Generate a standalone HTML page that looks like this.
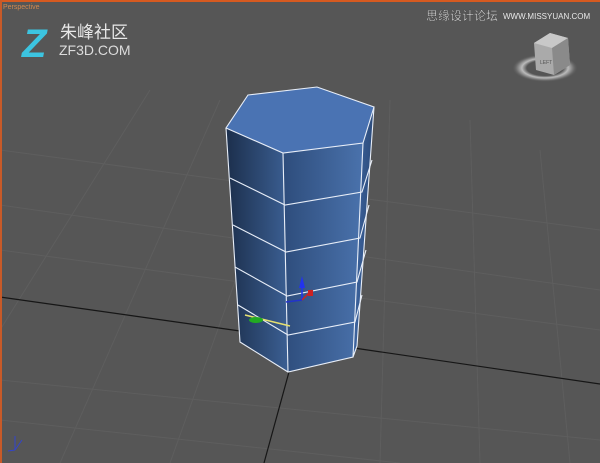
<!DOCTYPE html>
<html><head><meta charset="utf-8"><style>
html,body{margin:0;padding:0;width:600px;height:463px;overflow:hidden;background:#555}
</style></head><body>
<svg width="600" height="463" viewBox="0 0 600 463" xmlns="http://www.w3.org/2000/svg">
<defs>
<linearGradient id="lf" x1="0" x2="1" y1="0" y2="0"><stop offset="0" stop-color="#1c2f4c"/><stop offset="1" stop-color="#3b5f93"/></linearGradient>
<linearGradient id="ff" x1="0" x2="1" y1="0" y2="0"><stop offset="0" stop-color="#2e4d7c"/><stop offset="1" stop-color="#4a72ac"/></linearGradient>
<linearGradient id="rf" x1="0" x2="1"><stop offset="0" stop-color="#3e65a0"/><stop offset="1" stop-color="#2c4b7a"/></linearGradient>
<radialGradient id="ring"><stop offset="0.55" stop-color="#555"/><stop offset="0.7" stop-color="#bbb"/><stop offset="0.85" stop-color="#777"/><stop offset="1" stop-color="#555" stop-opacity="0"/></radialGradient>
</defs>
<rect width="600" height="463" fill="#565656"/>
<g stroke="#5e5e5e" stroke-width="1" fill="none">
<path d="M0 150 L600 230"/><path d="M0 205 L600 290"/><path d="M0 250 L600 330"/><path d="M0 380 L600 440"/><path d="M0 420 L400 463"/>
<path d="M60 463 L220 100"/><path d="M170 463 L300 100"/><path d="M380 463 L390 100"/><path d="M480 463 L470 120"/><path d="M570 463 L540 150"/><path d="M0 330 L150 90"/>
</g>
<g stroke="#161616" stroke-width="1.2" fill="none">
<path d="M0 297 L240 331"/><path d="M354 348 L600 384"/><path d="M289 372 L264 463"/>
</g>
<polygon points="226,128 283,153 288,372 240,342" fill="url(#lf)"/>
<polygon points="283,153 363,143 353,357 288,372" fill="url(#ff)"/>
<polygon points="363,143 374,107 357,346 353,357" fill="url(#rf)"/>
<polygon points="248,95 317,87 374,107 363,143 283,153 226,128" fill="#4a73b3"/>
<g stroke="#e8eef8" stroke-width="1.1" fill="none">
<polygon points="248,95 317,87 374,107 363,143 283,153 226,128"/>
<path d="M226 128 L240 342 L288 372 L353 357 L363 143 M283 153 L288 372 M374 107 L357 346 L353 357"/>
<path d="M230 178 L285 205 L362 192 L372 160"/>
<path d="M233 225 L286 252 L360 238 L369 205"/>
<path d="M235 267 L287 296 L357 282 L366 250"/>
<path d="M238 305 L288 335 L355 322 L362 295"/>
</g>
<g stroke-width="1.5" fill="none">
<path d="M302 300 L302 280" stroke="#2233ee"/><polygon points="299,288 305,288 302,276" fill="#2233ee"/>
<path d="M302 300 L312 290" stroke="#cc2222"/><rect x="308" y="290" width="5" height="6" fill="#cc2222"/>
<path d="M302 300 L286 302" stroke="#2233cc"/>
<path d="M245 315 L290 326" stroke="#e6e070"/>
<ellipse cx="256" cy="320" rx="7" ry="3" fill="#22aa22"/>
</g>
<path d="M15 450 L15 436 M15 450 L22 440 M15 450 L8 451" stroke="#3344cc" stroke-width="1" fill="none"/>
<rect x="0" y="0" width="600" height="2" fill="#d65a20"/>
<rect x="0" y="0" width="2" height="463" fill="#c85a28"/>
<text x="3" y="9" font-family="Liberation Sans, sans-serif" font-size="7" fill="#d08a50">Perspective</text>
<text x="22" y="57" font-family="Liberation Sans, sans-serif" font-size="40" font-weight="bold" font-style="italic" fill="#3cc4e0">Z</text>
<text x="60" y="38" font-family="Liberation Sans, 'Noto Sans CJK SC', sans-serif" font-size="17" fill="#e8e8e8">朱峰社区</text>
<text x="59" y="55" font-family="Liberation Sans, sans-serif" font-size="14" fill="#dcdcdc">ZF3D.COM</text>
<text x="426" y="20" font-family="Liberation Sans, 'Noto Sans CJK SC', sans-serif" font-size="12" fill="#e8e8e8" stroke="#333" stroke-width="0.3">思缘设计论坛</text>
<text x="503" y="19" font-family="Liberation Sans, sans-serif" font-size="8" fill="#e8e8e8">WWW.MISSYUAN.COM</text>
<ellipse cx="545" cy="68" rx="33" ry="14" fill="url(#ring)"/>
<polygon points="534,43 550,33 568,38 570,65 554,75 536,70" fill="#aaa"/>
<polygon points="534,43 552,48 568,38 550,33" fill="#c8c8c8"/>
<polygon points="552,48 568,38 570,65 554,75" fill="#8a8a8a"/>
<text x="540" y="64" font-family="Liberation Sans, sans-serif" font-size="5" fill="#555">LEFT</text>
</svg>
</body></html>
